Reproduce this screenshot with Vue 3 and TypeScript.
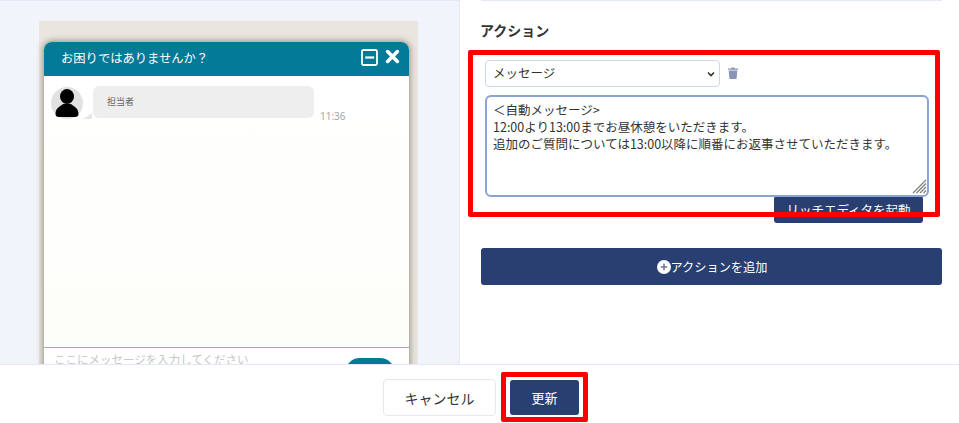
<script setup lang="ts">
const message = `＜自動メッセージ>
12:00より13:00までお昼休憩をいただきます。
追加のご質問については13:00以降に順番にお返事させていただきます。`
</script>

<template>
  <div class="page">
    <main class="main">
      <section class="left">
        <div class="frame">
          <div class="widget">
            <header class="w-head">
              <span class="w-title">お困りではありませんか？</span>
              <svg class="w-min" width="17" height="17" viewBox="0 0 17 17">
                <rect x="1" y="1" width="15" height="15" rx="1.5" fill="none" stroke="#fff" stroke-width="1.8" />
                <rect x="4.2" y="7.4" width="9" height="2.2" fill="#fff" />
              </svg>
              <svg class="w-close" width="15" height="15" viewBox="0 0 15 15">
                <path d="M2.6 2.6 L12.4 12.4 M12.4 2.6 L2.6 12.4" stroke="#fff" stroke-width="3.6" stroke-linecap="round" />
              </svg>
            </header>
            <div class="w-body">
              <div class="msg">
                <svg class="avatar" width="32" height="32" viewBox="0 0 32 32">
                  <circle cx="16" cy="16" r="16" fill="#e2e2e2" />
                  <ellipse cx="16" cy="9.5" rx="7" ry="7.6" fill="#000" />
                  <path d="M4.5 27 C4.5 21 9 19.5 12 17 L20 17 C23 19.5 27.5 21 27.5 27 Q27.5 30 24 30 H8 Q4.5 30 4.5 27 Z" fill="#000" />
                </svg>
                <i class="tail"></i>
                <div class="bubble">担当者</div>
                <span class="time">11:36</span>
              </div>
            </div>
            <div class="w-input">
              <span class="placeholder">ここにメッセージを入力してください</span>
              <i class="send"></i>
            </div>
          </div>
        </div>
      </section>
      <section class="right">
        <h2 class="title">アクション</h2>
        <div class="action">
          <div class="select-row">
            <div class="select">
              <span class="select-label">メッセージ</span>
              <svg width="8" height="6" viewBox="0 0 8 6"><path d="M1 1.5 L4 4.5 L7 1.5" fill="none" stroke="#333" stroke-width="1.6" /></svg>
            </div>
            <svg class="trash" width="10" height="12" viewBox="0 0 11 13">
              <path d="M0 1.6 H3.4 L4 .4 H7 L7.6 1.6 H11 V3 H0 Z M.8 3.8 H10.2 L9.5 12.2 Q9.4 13 8.6 13 H2.4 Q1.6 13 1.5 12.2 Z" fill="#8a94b4" />
            </svg>
          </div>
          <div class="text-wrap">
            <textarea class="text" :value="message" spellcheck="false"></textarea>
            <svg class="grip" width="15" height="15" viewBox="0 0 15 15">
              <path d="M14 1 L1 14 M14 4.5 L4.5 14 M14 8 L8 14 M14 11.5 L11.5 14" stroke="#808080" stroke-width="1.3" />
            </svg>
          </div>
          <button class="rich">リッチエディタを起動</button>
        </div>
        <button class="add">
          <svg width="14" height="14" viewBox="0 0 14 14">
            <circle cx="7" cy="7" r="7" fill="#fff" />
            <path d="M7 3.8 V10.2 M3.8 7 H10.2" stroke="#6b7794" stroke-width="1.5" />
          </svg>
          <span>アクションを追加</span>
        </button>
      </section>
    </main>
    <footer class="footer">
      <button class="cancel">キャンセル</button>
      <button class="update">更新</button>
    </footer>
    <div class="mark mark-action"></div>
    <div class="mark mark-update"></div>
  </div>
</template>

<style>
html, body { margin: 0; background: #fff; }
</style>

<style scoped>
.page {
  position: relative;
  width: 959px;
  height: 423px;
  overflow: hidden;
  display: flex;
  flex-direction: column;
  font-family: "Noto Sans CJK JP", "Noto Sans", sans-serif;
  color: #333;
  background: #fff;
}
.main { flex: 1; min-height: 0; display: flex; overflow: hidden; }
.left {
  flex: none;
  width: 420px;
  background: #f1f5fb;
  border-top: 1px solid #e3eaf5;
  border-right: 1px solid #e3eaf5;
  padding: 20px 0 0 39px;
}
.frame {
  width: 379px;
  height: 500px;
  padding: 21px 0 0 5px;
  box-sizing: border-box;
  background: #e9e6e0;
}
.widget {
  width: 365px;
  height: 420px;
  display: flex;
  flex-direction: column;
  border-radius: 8px 8px 0 0;
  box-shadow: 0 0 6px 1px rgba(80, 70, 55, 0.55);
  background: #fff;
}
.w-head {
  height: 34px;
  flex: none;
  background: #027a98;
  border-radius: 8px 8px 0 0;
  display: flex;
  align-items: center;
  color: #fff;
  padding: 0 9px 0 17px;
}
.w-title { flex: 1; font-size: 12.3px; padding-bottom: 3px; }
.w-min { margin: -4px 7px 0 0; }
.w-close { margin-top: -5px; }
.w-body {
  height: 272px;
  flex: none;
  background: linear-gradient(#fff, #fdfdf9);
  padding: 11px 0 0 7px;
  box-sizing: border-box;
  border-bottom: 1px solid #80b8c2;
}
.msg { position: relative; display: flex; align-items: flex-start; }
.avatar { flex: none; }
.tail {
  position: absolute;
  left: 32px;
  top: 26px;
  border-style: solid;
  border-width: 0 0 6px 9px;
  border-color: transparent transparent #e6e6e6 transparent;
}
.bubble {
  width: 221px;
  height: 32px;
  margin-left: 10px;
  margin-top: -1px;
  box-sizing: border-box;
  padding: 8px 14px;
  background: #eee;
  border-radius: 6px;
  font-size: 9px;
  line-height: 16px;
  color: #666;
}
.time { margin: 23px 0 0 6px; font-size: 10px; line-height: 12px; color: #a5a5ad; font-family: "Noto Sans", sans-serif; }
.w-input { position: relative; height: 60px; background: #fff; padding: 0 0 0 10px; }
.placeholder { display: block; font-size: 11.5px; line-height: 17px; padding-top: 3px; color: #c8c8c8; }
.send { position: absolute; left: 301px; top: 10px; width: 50px; height: 30px; border-radius: 15px; background: #027a98; }

.right {
  flex: 1;
  min-width: 0;
  padding: 0 17px 0 21px;
  display: flex;
  flex-direction: column;
  background: linear-gradient(#e3eaf5, #e3eaf5) 21px 0 / 461px 1px no-repeat;
}
.title { margin: 20px 0 0 -1px; font-size: 14px; line-height: 21px; font-weight: 700; color: #333; }
.action { display: flex; flex-direction: column; margin-top: 19px; padding-left: 4px; }
.select-row { display: flex; align-items: center; }
.select {
  width: 235px;
  height: 27px;
  box-sizing: border-box;
  display: flex;
  align-items: center;
  justify-content: space-between;
  padding: 0 4px 0 7px;
  border: 1px solid #cdd8eb;
  border-radius: 4px;
  background: #fff;
  font-size: 12.5px;
}
.select-label { padding-bottom: 2px; }
.trash { margin: -1px 0 0 8px; }
.text-wrap { position: relative; width: 444px; height: 102px; margin-top: 8px; }
.text {
  display: block;
  width: 100%;
  height: 100%;
  box-sizing: border-box;
  padding: 4px 6px;
  border: 2px solid #8aa3d0;
  border-radius: 6px;
  resize: none;
  outline: none;
  font: 12.5px/17px "Noto Sans CJK JP", "Noto Sans", sans-serif;
  color: #333;
  background: #fff;
  overflow: hidden;
}
.grip { position: absolute; right: 2px; bottom: 3px; }
.rich {
  align-self: flex-end;
  width: 149px;
  height: 27px;
  margin: -1px 19px 0 0;
  padding: 0;
  border: 0;
  border-radius: 3px;
  background: #293e71;
  color: #fff;
  font: 12.5px "Noto Sans CJK JP", sans-serif;
}
.add {
  height: 37px;
  margin-top: 25px;
  display: flex;
  align-items: center;
  justify-content: center;
  padding: 0 0 0 1px;
  border: 0;
  border-radius: 3px;
  background: #293e71;
  color: #fff;
  font: 12.2px "Noto Sans CJK JP", sans-serif;
}
.footer {
  height: 59px;
  flex: none;
  box-sizing: border-box;
  border-top: 1px solid #e3eaf5;
  background: #fff;
  display: flex;
  align-items: flex-start;
  justify-content: center;
  padding: 14px 0 0 3px;
  gap: 14px;
}
.cancel {
  width: 113px;
  height: 37px;
  padding: 0;
  border: 1px solid #e4eaf4;
  border-radius: 4px;
  background: #fff;
  color: #333;
  font: 14px "Noto Sans CJK JP", sans-serif;
}
.update {
  width: 69px;
  height: 35px;
  margin-top: 1px;
  padding: 0;
  border: 0;
  border-radius: 3px;
  background: #293e71;
  color: #fff;
  font: 13px "Noto Sans CJK JP", sans-serif;
}
.mark { position: absolute; border: 5px solid #f00; border-radius: 2px; box-sizing: border-box; pointer-events: none; }
.mark-action { left: 468px; top: 50px; width: 472px; height: 167px; }
.mark-update { left: 501px; top: 372px; width: 87px; height: 50px; }
</style>
